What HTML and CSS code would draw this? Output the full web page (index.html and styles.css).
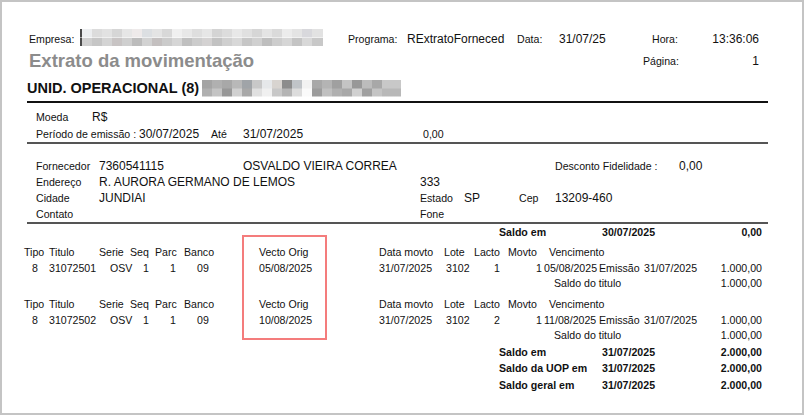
FILE: index.html
```html
<!DOCTYPE html>
<html lang="pt-BR">
<head>
	<meta charset="utf-8">
	<title>Extrato da movimentação</title>
	<link rel="stylesheet" href="styles.css">
</head>
<body>
	<div class="frame">
		<div class="report">
			<!-- Cabeçalho do relatório -->
			<div class="cab-1">
				<span>Empresa:</span>
				<span class="censura censura-empresa"></span>
				<span>Programa:</span>
				<span class="val">RExtratoForneced</span>
				<span>Data:</span>
				<span class="val">31/07/25</span>
				<span>Hora:</span>
				<span class="val dir">13:36:06</span>
			</div>
			<div class="cab-2">
				<h1>Extrato da movimentação</h1>
				<span>Página:</span>
				<span class="val dir">1</span>
			</div>
			<div class="cab-3">
				<h2>UNID. OPERACIONAL (8)</h2>
				<span class="censura censura-unid"></span>
			</div>
			<div class="regua regua-forte"></div>

			<!-- Filtros -->
			<div class="filtros">
				<div class="moeda">
					<span>Moeda</span>
					<span class="val">R$</span>
				</div>
				<div class="periodo">
					<span>Período de emissão :</span>
					<span class="val">30/07/2025</span>
					<span>Até</span>
					<span class="val">31/07/2025</span>
					<span>0,00</span>
				</div>
			</div>
			<div class="regua"></div>

			<!-- Dados do fornecedor -->
			<div class="fornecedor">
				<span class="col-lbl">Fornecedor</span>
				<span class="val">7360541115</span>
				<span class="val nome">OSVALDO VIEIRA CORREA</span>
				<span>Desconto Fidelidade :</span>
				<span class="val">0,00</span>

				<span class="col-lbl">Endereço</span>
				<span class="val larga">R. AURORA GERMANO DE LEMOS</span>
				<span class="val">333</span>

				<span class="col-lbl">Cidade</span>
				<span class="val larga">JUNDIAI</span>
				<span>Estado</span>
				<span class="val">SP</span>
				<span>Cep</span>
				<span class="val">13209-460</span>

				<span class="col-lbl">Contato</span>
				<span class="col-fone">Fone</span>
			</div>
			<div class="regua"></div>

			<!-- Movimento -->
			<div class="movimento">
				<div class="saldo">
					<span>Saldo em</span>
					<span>30/07/2025</span>
					<span>0,00</span>
				</div>

				<div class="titulo">
					<div class="titulo-cab">
						<span>Tipo</span><span>Titulo</span><span>Serie</span><span>Seq</span><span>Parc</span><span>Banco</span>
						<span>Vecto Orig</span><span>Data movto</span><span>Lote</span><span>Lacto</span><span>Movto</span><span>Vencimento</span>
					</div>
					<div class="titulo-dados">
						<span>8</span><span>31072501</span><span>OSV</span><span>1</span><span>1</span><span>09</span>
						<span>05/08/2025</span><span>31/07/2025</span><span>3102</span><span>1</span><span>1</span>
						<span>05/08/2025</span><span>Emissão</span><span>31/07/2025</span><span class="dir">1.000,00</span>
					</div>
					<div class="saldo-titulo">
						<span>Saldo do titulo</span>
						<span>1.000,00</span>
					</div>
				</div>

				<div class="titulo">
					<div class="titulo-cab">
						<span>Tipo</span><span>Titulo</span><span>Serie</span><span>Seq</span><span>Parc</span><span>Banco</span>
						<span>Vecto Orig</span><span>Data movto</span><span>Lote</span><span>Lacto</span><span>Movto</span><span>Vencimento</span>
					</div>
					<div class="titulo-dados">
						<span>8</span><span>31072502</span><span>OSV</span><span>1</span><span>1</span><span>09</span>
						<span>10/08/2025</span><span>31/07/2025</span><span>3102</span><span>2</span><span>1</span>
						<span>11/08/2025</span><span>Emissão</span><span>31/07/2025</span><span class="dir">1.000,00</span>
					</div>
					<div class="saldo-titulo">
						<span>Saldo do titulo</span>
						<span>1.000,00</span>
					</div>
				</div>

				<div class="totais">
					<div class="saldo">
						<span>Saldo em</span>
						<span>31/07/2025</span>
						<span>2.000,00</span>
					</div>
					<div class="saldo">
						<span>Saldo da UOP em</span>
						<span>31/07/2025</span>
						<span>2.000,00</span>
					</div>
					<div class="saldo">
						<span>Saldo geral em</span>
						<span>31/07/2025</span>
						<span>2.000,00</span>
					</div>
				</div>
			</div>
		</div>

		<!-- Marcação em vermelho sobre a coluna Vecto Orig -->
		<div class="destaque"></div>
	</div>
</body>
</html>
```

FILE: styles.css
```css
:root {
	--texto: #111;
	--cinza-titulo: #8c8c8c;
	--moldura: #c4c4c4;
	--regua: #555;
	--destaque: #f47c7c;
}

* { box-sizing: border-box; }

body {
	margin: 0;
	background: #fff;
	color: var(--texto);
	font-family: "Liberation Sans", Arial, sans-serif;
	font-size: 10.6px;
	line-height: 16px;
}

.frame {
	position: relative;
	width: 804px;
	height: 415px;
	border: 2px solid var(--moldura);
	overflow: hidden;
	background: #fff;
}

.report {
	padding: 29px 34px 0 22px;
}

.val { font-size: 12px; }
.dir { text-align: right; }

/* cabeçalho */
.cab-1 {
	display: grid;
	grid-template-columns: 51px 268px 59px 110px 42px 93px auto 1fr;
	align-items: baseline;
	padding: 0 9px 0 5px;
}

.cab-2 {
	display: grid;
	grid-template-columns: 614px auto 1fr;
	align-items: center;
	height: 22px;
	margin-top: 3px;
	padding: 0 9px 0 5px;
}

.cab-2 h1 {
	margin: 0;
	color: var(--cinza-titulo);
	font-size: 18.5px;
	font-weight: bold;
	line-height: 22px;
}

.cab-3 {
	display: flex;
	align-items: center;
	height: 18px;
	margin-top: 7px;
	padding-left: 3px;
}

.cab-3 h2 {
	margin: 0;
	font-size: 14.5px;
	font-weight: bold;
	line-height: 18px;
}

/* blocos borrados */
.censura { display: block; height: 17px; }

.censura-empresa {
	align-self: start;
	width: 243px;
	margin-top: -2px;
	background:
		linear-gradient(90deg, #4a4a4a 0 2px, #eceef0 2px 12px, #dcdcdc 12px 22px, #e2e2e2 22px 32px, #d6d6d6 32px 42px, #e6e6e6 42px 52px, #eeeaea 52px 62px, #dcdfe2 62px 72px, #e4e4e4 72px 82px, #d8d8d8 82px 92px, #f0f0f0 92px 102px, #e8e8e8 102px 112px, #dedede 112px 122px, #e6e6e6 122px 132px, #d4d4d4 132px 142px, #dcdcdc 142px 152px, #e8e8e8 152px 162px, #e0e0e0 162px 172px, #d6d6d6 172px 182px, #e4e4e4 182px 192px, #dadada 192px 202px, #ececec 202px 212px, #e4e4e4 212px 222px, #d8d8dc 222px 232px, #e2e2e2 232px 243px) top / 100% 50% no-repeat,
		linear-gradient(90deg, #4a4a4a 0 2px, #d0d0d0 2px 12px, #c6c6c6 12px 22px, #d4d4d4 22px 32px, #c8c4c4 32px 42px, #cfcfcf 42px 52px, #bcbcbc 52px 62px, #d2d2d2 62px 72px, #c4c0c0 72px 82px, #cbcbcb 82px 92px, #d6d6d6 92px 102px, #c0c0c0 102px 112px, #cccccc 112px 122px, #d4d2d2 122px 132px, #c2c2c2 132px 142px, #cfcfcf 142px 152px, #d8d8d8 152px 162px, #c6c6c6 162px 172px, #d0d0d0 172px 182px, #bebebe 182px 192px, #cdcdcd 192px 202px, #d6d6d6 202px 212px, #c4c4c4 212px 222px, #d8d8d8 222px 232px, #c8c8c8 232px 243px) bottom / 100% 50% no-repeat;
}

.censura-unid {
	width: 199px;
	margin-left: 3px;
	background:
		linear-gradient(90deg, #a4a4a4 0 10px, #b0b0b0 10px 20px, #a8a8a8 20px 30px, #b8b8b8 30px 40px, #a0a4a8 40px 50px, #c8c8c8 50px 60px, #e6e8ea 60px 70px, #d8d4d0 70px 80px, #8c8c8c 80px 90px, #c0c4c8 90px 100px, #f2f2f2 100px 110px, #a8a8a8 110px 120px, #b4b4b4 120px 130px, #a0a0a0 130px 140px, #c4c4c4 140px 150px, #989898 150px 160px, #bcbcbc 160px 170px, #a8a8a8 170px 180px, #c8c8c8 180px 199px) top / 100% 50% no-repeat,
		linear-gradient(90deg, #b0b0b0 0 10px, #c4c4c4 10px 20px, #989898 20px 30px, #d0d0d0 30px 40px, #a8a8a8 40px 50px, #e0e0e0 50px 60px, #f0f0f0 60px 70px, #c8c8c8 70px 80px, #b4b4b4 80px 90px, #dcdcdc 90px 100px, #fafafa 100px 110px, #9c9c9c 110px 120px, #c0c0c0 120px 130px, #b0b0b0 130px 140px, #a8a8a8 140px 150px, #d0d0d0 150px 160px, #a0a0a0 160px 170px, #c4c4c4 170px 180px, #b8b8b8 180px 199px) bottom / 100% 50% no-repeat;
}

/* réguas */
.regua {
	margin-left: 3px;
	border-top: 2px solid var(--regua);
}

.regua-forte {
	margin-top: 4px;
	border-top-color: #111;
}

/* filtros */
.filtros { padding: 6px 0 0 12px; }

.moeda {
	display: grid;
	grid-template-columns: 56px 1fr;
	align-items: baseline;
}

.periodo {
	display: grid;
	grid-template-columns: 103px 72px 32px 180px 1fr;
	align-items: baseline;
	margin-top: 1px;
}

/* fornecedor */
.fornecedor {
	display: grid;
	grid-template-columns: 63px 144px 177px 44px 55px 36px 124px 1fr;
	grid-template-rows: 16px 16px 16px 14px;
	align-items: baseline;
	padding: 14px 0 2px 12px;
}

.fornecedor .col-lbl { grid-column: 1; }
.fornecedor .nome { grid-column: 3 / 7; }
.fornecedor .larga { grid-column: span 2; }
.fornecedor .col-fone { grid-column: 4; }

/* movimento */
.saldo {
	display: grid;
	grid-template-columns: 103px 1fr auto;
	padding: 0 6px 0 475px;
	font-weight: bold;
}

.titulo { margin-top: 4px; }
.titulo + .titulo { margin-top: 5px; }

.titulo-cab {
	display: grid;
	grid-template-columns: 25px 50px 31px 25px 29px 75px 120px 65px 30px 34px 41px 1fr;
}

.titulo-dados {
	display: grid;
	grid-template-columns: 17px 61px 33px 27px 27px 62px 120px 67px 48px 42px 8px 55px 45px 60px 1fr;
	padding: 0 6px 0 8px;
	white-space: nowrap;
}

.saldo-titulo {
	display: grid;
	grid-template-columns: 1fr auto;
	padding: 0 6px 0 530px;
	line-height: 15px;
}

.totais { margin-top: 1px; }
.totais .saldo:last-child { margin-top: 1px; }

/* marcação */
.destaque {
	position: absolute;
	left: 240px;
	top: 233px;
	width: 85px;
	height: 105px;
	border: 2px solid var(--destaque);
}
```
